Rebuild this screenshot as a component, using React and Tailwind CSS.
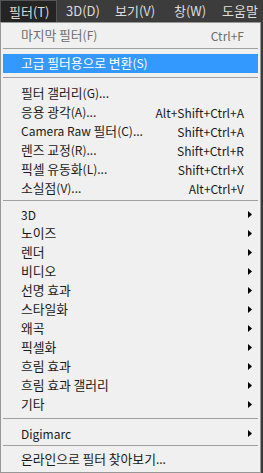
import React from "react";

const font = { fontFamily: '"Noto Sans CJK KR", "Noto Sans", sans-serif' };

// hangul in the reference font runs a little wider than Noto's
function Txt({ children }) {
  return children.split(/([\uAC00-\uD7A3]+)/).map((p, i) =>
    /[\uAC00-\uD7A3]/.test(p) ? (
      <span key={i} className="text-[12.8px]">{p}</span>
    ) : (
      <span key={i}>{p}</span>
    )
  );
}

function Row({ label, shortcut, sub, disabled, active }) {
  return (
    <div
      className={
        "flex items-center h-[19px] pl-[18px] pr-[14px] mx-[2px] text-[12px] leading-none " +
        (active ? "bg-[#3399ff] text-white" : disabled ? "text-[#6d6d6d]" : "text-[#1a1a1a]")
      }
    >
      <span className="flex-1 whitespace-nowrap">
        <Txt>{label}</Txt>
      </span>
      {shortcut && <span className="whitespace-nowrap">{shortcut}</span>}
      {sub && (
        <svg width="4" height="7" viewBox="0 0 4 7" className="mr-[-8px]">
          <path d="M0 0 L4 3.5 L0 7 Z" fill="#000" />
        </svg>
      )}
    </div>
  );
}

function Sep({ h, top }) {
  return (
    <div className={"mx-[2px] " + h + " " + top}>
      <div className="border-t border-[#a0a0a0]" />
    </div>
  );
}

export default function App() {
  const group1 = [
    ["필터 갤러리(G)...", ""],
    ["응용 광각(A)...", "Alt+Shift+Ctrl+A"],
    ["Camera Raw 필터(C)...", "Shift+Ctrl+A"],
    ["렌즈 교정(R)...", "Shift+Ctrl+R"],
    ["픽셀 유동화(L)...", "Shift+Ctrl+X"],
    ["소실점(V)...", "Alt+Ctrl+V"],
  ];
  const group2 = ["3D", "노이즈", "렌더", "비디오", "선명 효과", "스타일화", "왜곡", "픽셀화", "흐림 효과", "흐림 효과 갤러리", "기타"];

  return (
    <div className="w-[263px] h-[473px] bg-[#3a3a3a] overflow-hidden" style={font}>
      {/* menu bar */}
      <div className="flex items-center h-[22px] bg-[#3c3c3c] text-[13px] text-[#dcdcdc] whitespace-nowrap">
        <div className="h-[22px] w-[57px] flex items-center pl-[8px] bg-[#242424] border border-[#555] border-b-0">필터(T)</div>
        <div className="pl-[9px] w-[58px]">3D(D)</div>
        <div className="w-[59px]">보기(V)</div>
        <div className="w-[48px]">창(W)</div>
        <div>도움말</div>
      </div>

      {/* dropdown */}
      <div className="w-[261px] h-[451px] bg-[#f0f0f0] border border-[#979797] pt-[3px]">
        <Row label="마지막 필터(F)" shortcut="Ctrl+F" disabled />
        <Sep h="h-[8px]" top="pt-[3px]" />
        <div className="h-[20px] flex flex-col justify-center">
          <Row label="고급 필터용으로 변환(S)" active />
        </div>
        <Sep h="h-[11px]" top="pt-[4px]" />
        {group1.map(([l, s]) => (
          <Row key={l} label={l} shortcut={s} />
        ))}
        <Sep h="h-[7px]" top="pt-[2px]" />
        {group2.map((l) => (
          <Row key={l} label={l} sub />
        ))}
        <Sep h="h-[10px]" top="pt-[4px]" />
        <Row label="Digimarc" sub />
        <Sep h="h-[7px]" top="pt-[2px]" />
        <Row label="온라인으로 필터 찾아보기..." />
      </div>
    </div>
  );
}
